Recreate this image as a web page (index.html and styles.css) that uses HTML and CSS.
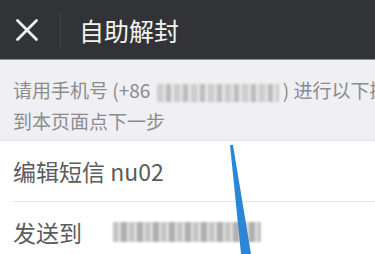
FILE: index.html
```html
<!DOCTYPE html>
<html>
<head>
<meta charset="utf-8">
<link rel="stylesheet" href="styles.css">
</head>
<body>
<div class="page">
  <header class="topbar">
    <div class="close">
      <svg width="24" height="24" viewBox="0 0 24 24"><path d="M2.5 2.5 L21.5 21.5 M21.5 2.5 L2.5 21.5" stroke="#f2f2f2" stroke-width="2.8" stroke-linecap="round"/></svg>
    </div>
    <div class="sep"></div>
    <div class="title">自助解封</div>
  </header>
  <section class="notice">
    <p class="line">请用手机号 (+86 <span class="blur b1"></span> ) 进行以下操作，</p>
    <p class="line">到本页面点下一步</p>
  </section>
  <section class="list">
    <div class="row">编辑短信 nu02</div>
    <div class="row last"><span class="label">发送到</span><span class="blur b2"></span></div>
  </section>
  <svg class="arrow" width="375" height="254" viewBox="0 0 375 254"><polygon points="230,145 233,145 251,254 241,254" fill="#2a86d6"/></svg>
</div>
</body>
</html>
```
FILE: styles.css
```css
html, body { margin: 0; padding: 0; }
body {
  width: 375px; height: 254px; overflow: hidden;
  font-family: "Noto Sans CJK SC", "Noto Sans", sans-serif;
  background: #fff;
}
.page { position: relative; height: 254px; }
.topbar {
  height: 59px; background: #323337;
  display: flex; align-items: center;
  border-bottom: 1px solid #8a8a8e;
}
.close { width: 60px; display: flex; justify-content: center; padding-top: 1px; margin-left: -3px; margin-right: 3px; }
.sep { width: 1px; height: 36px; background: #404145; }
.title { color: #f4f4f4; font-size: 25px; margin-left: 18px; letter-spacing: 0; }
.notice {
  background: #efeff4; height: 81px; padding: 14px 0 0 13px; box-sizing: border-box;
  border-bottom: 1px solid #e3e3e8; white-space: nowrap; overflow: hidden;
}
.line { margin: 0; font-size: 19px; line-height: 31px; color: #8c8c8c; }
.blur {
  display: inline-block; vertical-align: middle; filter: blur(1.3px);
}
.b1 {
  width: 122px; height: 18px; margin-left: 2px;
  background: repeating-linear-gradient(90deg, #cdcdcd 0 6px, #e2e2e2 6px 9px, #bdbdbd 9px 14px, #e6e6e6 14px 17px);
}
.list { padding-left: 13px; }
.row {
  height: 60px; display: flex; align-items: center;
  font-size: 23px; color: #5c5c5c;
  border-bottom: 1px solid #e6e6e6;
}
.row.last { border-bottom: none; }
.label { width: 100px; }
.b2 {
  width: 148px; height: 20px;
  background: repeating-linear-gradient(90deg, #c4c4c4 0 5px, #dedede 5px 8px, #b0b0b0 8px 14px, #e4e4e4 14px 16px);
}
.arrow { position: absolute; left: 0; top: 0; pointer-events: none; }
```
